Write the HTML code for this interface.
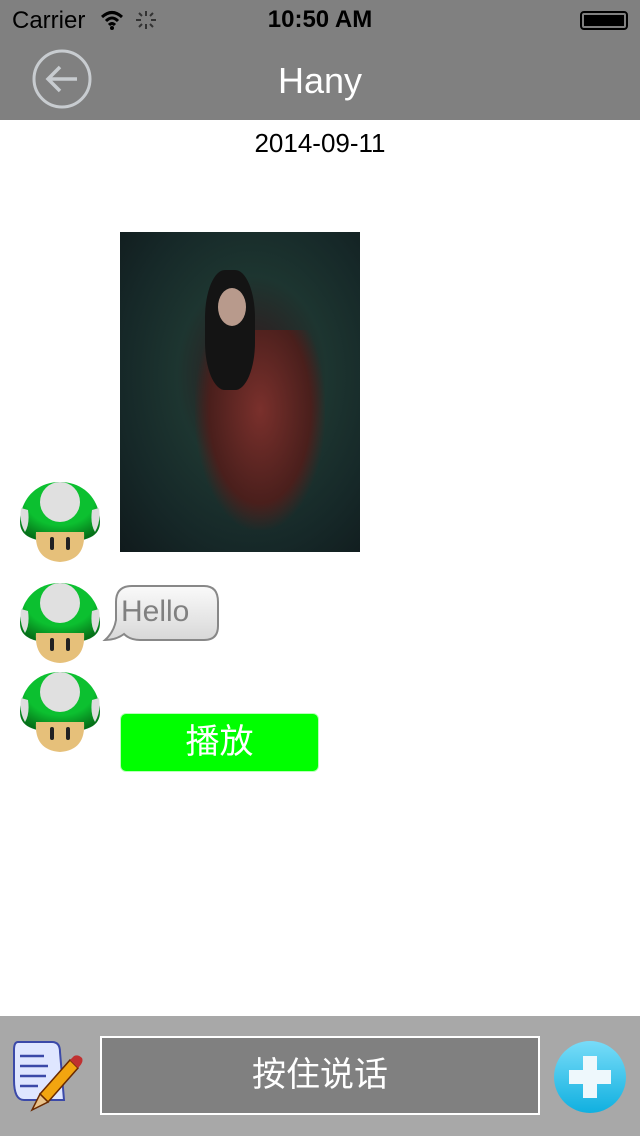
<!DOCTYPE html><html><head><meta charset="utf-8"><style>
*{margin:0;padding:0;box-sizing:border-box}
body{width:640px;height:1136px;position:relative;background:#fff;font-family:"Liberation Sans","Noto Sans CJK SC",sans-serif;overflow:hidden}
.a{position:absolute}
</style></head><body>
<div class="a" style="left:0;top:0;width:640px;height:120px;background:#808080"></div>
<div class="a" style="left:12px;top:7px;font-size:24px;color:#000">Carrier</div>
<svg class="a" style="left:100px;top:9px" width="60" height="24"><path d="M2 8 Q12 -1 22 8 M6 12 Q12 6 18 12 M9 16 Q12 13 15 16" stroke="#000" stroke-width="3" fill="none"/><circle cx="12" cy="19" r="2" fill="#000"/><g stroke="#333" stroke-width="2"><path d="M46 2v5M46 15v5M36 11h5M51 11h5M39 4l3 3M50 15l3 3M39 18l3-3M50 7l3-3"/></g></svg>
<div class="a" style="left:0;width:640px;top:6px;text-align:center;font-size:24px;font-weight:bold">10:50 AM</div>
<div class="a" style="left:580px;top:11px;width:48px;height:19px;border:2px solid #000;border-radius:4px;padding:2px"><div style="background:#000;width:100%;height:100%"></div></div>
<svg class="a" style="left:31px;top:48px" width="62" height="62"><circle cx="31" cy="31" r="28" fill="none" stroke="#c8ccd0" stroke-width="3"/><path d="M46 31H17M29 19L17 31L29 43" stroke="#c8ccd0" stroke-width="3.5" fill="none"/></svg>
<div class="a" style="left:0;width:640px;top:60px;text-align:center;font-size:36px;color:#fff">Hany</div>
<div class="a" style="left:0;width:640px;top:128px;text-align:center;font-size:26px;color:#000">2014-09-11</div>
<div class="a" style="left:120px;top:232px;width:240px;height:320px;background:radial-gradient(ellipse at 55% 45%,#3a2a28 0,#2a2525 20%,#1d3530 40%,#162828 70%,#101a1c 100%)"></div>
<div class="a" style="left:195px;top:330px;width:130px;height:200px;background:radial-gradient(ellipse at 50% 40%,#7a302c,#4a1f1c 55%,transparent 72%)"></div>
<div class="a" style="left:205px;top:270px;width:50px;height:120px;border-radius:40%;background:#141414"></div>
<div class="a" style="left:218px;top:288px;width:28px;height:38px;border-radius:50%;background:#b89a8c"></div>
<svg width="0" height="0"><defs><radialGradient id="cg" cx="0.5" cy="0.3" r="0.7"><stop offset="0.6" stop-color="#0cc030"/><stop offset="1" stop-color="#057018"/></radialGradient><g id="m"><path d="M40 0C14 0 0 20 0 40C0 54 12 60 40 60C68 60 80 54 80 40C80 20 66 0 40 0Z" fill="url(#cg)"/><ellipse cx="40" cy="20" rx="20" ry="20" fill="#e0e0e0"/><path d="M1 26Q-1 40 5 50Q10 42 8 28Z M79 26Q81 40 75 50Q70 42 72 28Z" fill="#ddd"/><path d="M16 50Q14 78 40 80Q66 78 64 50Z" fill="#e6c07a"/><rect x="30" y="55" width="4" height="13" rx="2" fill="#222"/><rect x="46" y="55" width="4" height="13" rx="2" fill="#222"/></g></defs></svg>
<svg class="a" style="left:20px;top:482px" width="80" height="80"><use href="#m"/></svg>
<svg class="a" style="left:20px;top:583px" width="80" height="80"><use href="#m"/></svg>
<svg class="a" style="left:20px;top:672px" width="80" height="80"><use href="#m"/></svg>
<svg class="a" style="left:102px;top:584px" width="120" height="62"><defs><linearGradient id="g" x1="0" y1="0" x2="0" y2="1"><stop offset="0" stop-color="#fafafa"/><stop offset="1" stop-color="#d8d8d8"/></linearGradient></defs><path d="M30 2H102Q116 2 116 18V42Q116 56 102 56H38Q28 56 22 50Q14 56 3 56Q12 48 14 36V18Q14 2 30 2Z" fill="url(#g)" stroke="#888" stroke-width="2"/></svg>
<div class="a" style="left:121px;top:595px;font-size:30px;color:#808080">Hello</div>
<div class="a" style="left:120px;top:713px;width:199px;height:59px;background:#00ff00;border-radius:6px;border:1px solid #bfb;color:#fff;font-size:34px;text-align:center;line-height:56px">播放</div>
<div class="a" style="left:0;top:1016px;width:640px;height:120px;background:#a8a8a8"></div>
<svg class="a" style="left:12px;top:1040px" width="78" height="76"><path d="M6 2H40Q48 2 48 12L52 60H12Q2 60 2 40V10Q2 2 6 2Z" fill="#dfe6ff" stroke="#3b49a8" stroke-width="2"/><path d="M8 16H32M8 26H36M8 36H34M8 46H26" stroke="#3b49a8" stroke-width="2.5"/><path d="M58 20L66 28L36 62L28 54Z" fill="#f2a510" stroke="#6a2a00" stroke-width="1.5"/><path d="M58 20L62 16Q66 14 70 18Q72 22 66 28Z" fill="#c03030"/><path d="M28 54L36 62L20 70Z" fill="#e8c28a" stroke="#6a2a00" stroke-width="1.5"/></svg>
<div class="a" style="left:100px;top:1036px;width:440px;height:79px;border:2px solid #fff;background:#808080;color:#fff;font-size:34px;text-align:center;line-height:75px">按住说话</div>
<svg class="a" style="left:553px;top:1040px" width="74" height="74"><defs><linearGradient id="b" x1="0" y1="0" x2="0" y2="1"><stop offset="0" stop-color="#78dcf8"/><stop offset="1" stop-color="#10b0e0"/></linearGradient></defs><ellipse cx="37" cy="37" rx="36" ry="36" fill="url(#b)"/><path d="M30 16H44V30H58V44H44V58H30V44H16V30H30Z" fill="#eef8fc"/></svg>
</body></html>
